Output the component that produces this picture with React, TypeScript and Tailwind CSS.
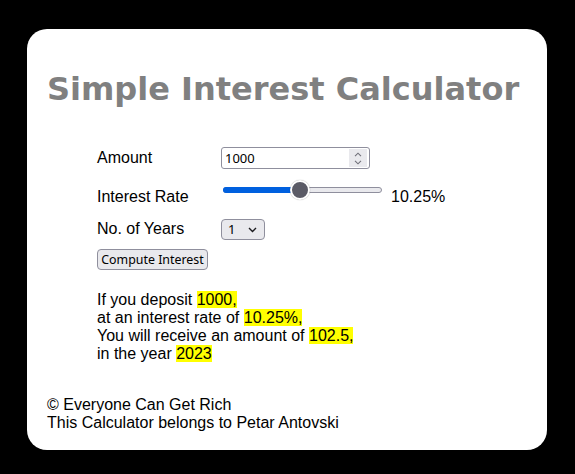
import React from "react";

function Chevron({ dir }: { dir: "up" | "down" }) {
  return (
    <svg width="8" height="5" viewBox="0 0 8 5" className="block">
      {dir === "up" ? (
        <path d="M1 4.2 L4 1.2 L7 4.2" fill="none" stroke="#6f6f78" strokeWidth="1.1" />
      ) : (
        <path d="M1 0.8 L4 3.8 L7 0.8" fill="none" stroke="#6f6f78" strokeWidth="1.1" />
      )}
    </svg>
  );
}

export default function App() {
  return (
    <div className="min-h-[474px] bg-black pt-[29px] pl-[27px] pr-[28px]">
      <div className="h-[421px] rounded-[20px] bg-white pl-[20px] pt-[42px] font-['Liberation_Sans',Arial,sans-serif] text-[16px] leading-[18px] text-black">
        <h1 className="m-0 font-['DejaVu_Sans',Verdana,sans-serif] text-[32px] font-bold leading-[37px] text-[#808080]">
          Simple Interest Calculator
        </h1>

        <div className="ml-[50px]">
          {/* Amount */}
          <div className="mt-[39px] flex h-[22px] items-start">
            <div className="mt-[2px] w-[124px]">Amount</div>
            <div className="relative h-[22px] w-[149px]">
              <input
                type="text"
                defaultValue="1000"
                className="h-[22px] w-[149px] rounded-[3px] border border-[#8f8f9d] bg-white pl-[3px] font-['Noto_Sans',sans-serif] text-[13px] leading-[20px] text-black outline-none"
              />
              <div className="absolute right-[3px] top-[2px] flex h-[18px] w-[18px] flex-col items-center justify-center gap-[3px] bg-[#e9e9ed]">
                <Chevron dir="up" />
                <Chevron dir="down" />
              </div>
            </div>
          </div>

          {/* Interest Rate */}
          <div className="mt-[11px] flex h-[26px] items-start">
            <div className="mt-[8px] w-[124px]">Interest Rate</div>
            <div role="slider" aria-valuenow={10.25} className="relative h-[20px] w-[164px]">
              <div className="absolute left-[2px] right-[3px] top-[7px] h-[6px] rounded-full border border-[#8f8f9d] bg-[#e9e9ed]" />
              <div className="absolute left-[2px] top-[7px] h-[6px] w-[74px] rounded-full bg-[#0060df]" />
              <div className="absolute left-[69px] top-0 h-[20px] w-[20px] rounded-full border-2 border-white bg-[#5b5b66] shadow-[0_0_1px_rgba(0,0,0,0.4)]" />
            </div>
            <div className="ml-[6px] mt-[8px]">10.25%</div>
          </div>

          {/* Years */}
          <div className="mt-[13px] flex h-[21px] items-start">
            <div className="mt-[1px] w-[124px]">No. of Years</div>
            <div className="relative h-[21px] w-[44px]">
              <select
                defaultValue="1"
                className="h-[21px] w-[44px] appearance-none rounded-[4px] border border-[#8f8f9d] bg-[#e9e9ed] pl-[6px] font-['Noto_Sans',sans-serif] text-[13px] leading-[19px] text-black outline-none"
              >
                <option value="1">1</option>
                <option value="2">2</option>
                <option value="3">3</option>
                <option value="5">5</option>
                <option value="10">10</option>
              </select>
              <div className="pointer-events-none absolute right-[8px] top-[8px]">
                <svg width="9" height="6" viewBox="0 0 9 6" className="block">
                  <path d="M1 1 L4.5 4.5 L8 1" fill="none" stroke="#1b1b1f" strokeWidth="1.4" />
                </svg>
              </div>
            </div>
          </div>

          {/* Button */}
          <div className="mt-[9px]">
            <button
              type="button"
              className="h-[21px] w-[111px] rounded-[4px] border border-[#8f8f9d] bg-[#e9e9ed] p-0 text-center font-['Noto_Sans',sans-serif] text-[12.4px] leading-[19px] text-black"
            >
              Compute Interest
            </button>
          </div>

          {/* Result */}
          <div className="mt-[21px]">
            <div>
              If you deposit <span className="bg-[#ffff00]">1000,</span>
            </div>
            <div>
              at an interest rate of <span className="bg-[#ffff00]">10.25%,</span>
            </div>
            <div>
              You will receive an amount of <span className="bg-[#ffff00]">102.5,</span>
            </div>
            <div>
              in the year <span className="bg-[#ffff00]">2023</span>
            </div>
          </div>
        </div>

        {/* Footer */}
        <div className="mt-[33px]">
          <div>© Everyone Can Get Rich</div>
          <div>This Calculator belongs to Petar Antovski</div>
        </div>
      </div>
    </div>
  );
}
